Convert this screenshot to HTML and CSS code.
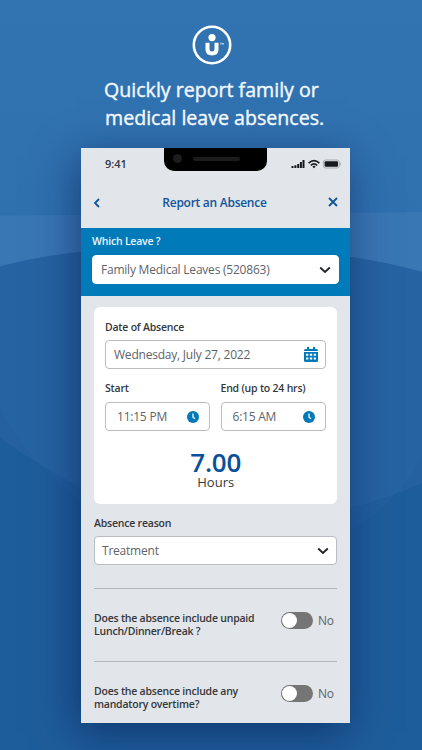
FILE: index.html
```
<!DOCTYPE html>
<html lang="en">
<head>
    <meta charset="UTF-8">
    <meta name="viewport" content="width=device-width, initial-scale=1.0">
    <title>Report an Absence</title>
    <link rel="stylesheet" href="styles.css">
</head>
<body>
    <!-- Background curves -->
    <svg class="backdrop" viewBox="0 0 422 750" aria-hidden="true">
        <defs>
            <linearGradient id="top" x1="0" y1="0" x2="0" y2="1">
                <stop offset="0" stop-color="#3274b1"/>
                <stop offset="1" stop-color="#2f70af"/>
            </linearGradient>
        </defs>
        <rect width="422" height="750" fill="#1e5d9b"/>
        <rect width="422" height="216" fill="url(#top)"/>
        <path d="M0 215.5Q211 214 422 212V300H0Z" fill="#3976b4"/>
        <path d="M0 266.5Q40 256 81 252Q215 238 350 257Q386 262 422 272V750H0Z" fill="#1e5d9b"/>
        <path d="M0 266.5Q40 256 81 252Q215 238 350 257Q386 262 422 272V457Q398 503 350 530Q215 590 80 500Q25 458 0 407Z" fill="#2f6aa8" opacity=".22"/>
        <path d="M0 266.5Q40 256 81 252Q215 238 350 257Q386 262 422 272V483Q390 498 350 508Q215 545 80 487Q38 465 0 438Z" fill="#2f6aa8" opacity=".4"/>
    </svg>

    <div class="promo">
        <svg class="logo" viewBox="0 0 40 40" aria-hidden="true">
            <circle cx="20" cy="20" r="18.2" fill="none" stroke="#fff" stroke-width="2.6"/>
            <circle cx="20" cy="12.6" r="3.6" fill="#fff"/>
            <path d="M15.5 17.8v6.5q0 4.2 4.5 4.2t4.5-4.2v-6.5" fill="none" stroke="#fff" stroke-width="4"/>
            <path d="M28 18.2h1.8M28.9 18.2v1.5M30.3 19.7v-1.5l.6.8.6-.8v1.5" fill="none" stroke="#fff" stroke-width=".5"/>
        </svg>
        <h1><span>Quickly report family or</span><span class="second">medical leave absences.</span></h1>
    </div>

    <div class="phone">
        <div class="status">
            <span class="time">9:41</span>
            <div class="notch"><i class="camera"></i><i class="speaker"></i></div>
            <svg class="signals" viewBox="0 0 50 12" aria-hidden="true">
                <path d="M1.5 10V7.9M4.4 10V7.2M7.2 10V5.9M9.9 10V4M12.5 10V2" stroke="#171a1d" stroke-width="2"/>
                <path d="M17.6 5.1Q23 .3 28.4 5.1M19.8 7.3Q23 4.5 26.2 7.3" fill="none" stroke="#171a1d" stroke-width="1.6"/>
                <path d="M21.3 8.5Q23 7.2 24.7 8.5L23 10.3Z" fill="#171a1d"/>
                <rect x="32.4" y="2" width="15.8" height="8" rx="2" fill="none" stroke="#9a9da1" stroke-width=".8"/>
                <rect x="33.6" y="3.2" width="13.4" height="5.6" rx="1" fill="#171a1d"/>
                <path d="M49.1 4.7v2.7" stroke="#9a9da1"/>
            </svg>
        </div>

        <div class="title-bar">
            <svg class="back" viewBox="0 0 8 10" aria-hidden="true"><path d="M6 1 2 5l4 4"/></svg>
            <h2>Report an Absence</h2>
            <svg class="close" viewBox="0 0 10 10" aria-hidden="true"><path d="m1 1 8 8M9 1 1 9"/></svg>
        </div>

        <div class="leave">
            <label>Which Leave ?</label>
            <div class="field">
                <span>Family Medical Leaves (520863)</span>
                <svg class="chevron" viewBox="0 0 12 8" aria-hidden="true"><path d="m1.2 1.5 4.8 4.5 4.8-4.5"/></svg>
            </div>
        </div>

        <div class="card">
            <label>Date of Absence</label>
            <div class="field date">
                <span>Wednesday, July 27, 2022</span>
                <svg class="calendar" viewBox="0 0 14 15" aria-hidden="true">
                    <path fill="#0079b8" fill-rule="evenodd" d="M3 0h2v2h4V0h2v2h1.5Q14 2 14 3.5V4H0v-.5Q0 2 1.5 2H3ZM0 5h14v8.5q0 1.5-1.5 1.5h-11Q0 15 0 13.5ZM2 6.8v2h2.3v-2Zm3.8 0v2h2.4v-2Zm3.9 0v2H12v-2ZM2 10.6v2h2.3v-2Zm3.8 0v2h2.4v-2Zm3.9 0v2H12v-2Z"/>
                </svg>
            </div>
            <div class="times">
                <div>
                    <label>Start</label>
                    <div class="field hour">
                        <span>11:15 PM</span>
                        <svg class="clock" viewBox="0 0 12 12" aria-hidden="true"><circle cx="6" cy="6" r="6"/><path d="M6 2.6V6.2L8 7.8"/></svg>
                    </div>
                </div>
                <div>
                    <label>End (up to 24 hrs)</label>
                    <div class="field hour">
                        <span>6:15 AM</span>
                        <svg class="clock" viewBox="0 0 12 12" aria-hidden="true"><circle cx="6" cy="6" r="6"/><path d="M6 2.6V6.2L8 7.8"/></svg>
                    </div>
                </div>
            </div>
            <div class="total">7.00</div>
            <div class="unit">Hours</div>
        </div>

        <div class="reason">
            <label>Absence reason</label>
            <div class="field">
                <span>Treatment</span>
                <svg class="chevron" viewBox="0 0 12 8" aria-hidden="true"><path d="m1.2 1.5 4.8 4.5 4.8-4.5"/></svg>
            </div>
        </div>

        <div class="question">
            <p>Does the absence include unpaid<br>Lunch/Dinner/Break ?</p>
            <i class="toggle"></i>
            <span>No</span>
        </div>
        <div class="question">
            <p>Does the absence include any<br>mandatory overtime?</p>
            <i class="toggle"></i>
            <span>No</span>
        </div>
    </div>
</body>
</html>
```
FILE: styles.css
```
* {
    box-sizing: border-box;
}

body {
    font-family: "Open Sans", sans-serif;
    margin: 0;
    height: 750px;
    overflow: hidden;
    color: #35383c;
    background-color: #1e5d9b;
}

svg {
    display: block;
    flex: none;
}

.backdrop {
    position: absolute;
    z-index: -1;
    width: 422px;
    height: 750px;
}

.promo {
    height: 148px;
    padding-top: 25px;
}

.logo {
    width: 40px;
    height: 40px;
    margin-left: 192px;
}

h1 {
    margin: 11px 0 0;
    font-size: 19.6px;
    font-weight: 500;
    line-height: 28px;
    color: #f2f8fe;
    -webkit-text-stroke: 0.4px #f2f8fe;
    white-space: nowrap;
}

h1 span {
    display: block;
    width: fit-content;
    margin-left: 104px;
}

h1 .second {
    margin-left: 105px;
}

.phone {
    width: 269.4px;
    height: 575px;
    margin-left: 81px;
    overflow: hidden;
    background: #e2e5ea;
    box-shadow: -4px 10px 40px rgba(0, 22, 70, 0.52);
}

.status {
    display: flex;
    height: 32px;
    padding-left: 24px;
}

.time {
    width: 59px;
    padding-top: 8px;
    font-size: 11px;
    font-weight: 600;
    line-height: 16px;
}

.notch {
    display: flex;
    align-items: flex-start;
    gap: 11px;
    width: 103px;
    height: 23px;
    padding: 6px 9px;
    background: #000;
    border-radius: 0 0 10px 10px;
}

.camera {
    width: 9px;
    height: 9px;
    background: #1c1c1c;
    border-radius: 50%;
}

.speaker {
    width: 47px;
    height: 4px;
    margin-top: 3px;
    background: #1c1c1c;
    border-radius: 2px;
}

.signals {
    width: 50px;
    height: 12px;
    margin: 10px 0 0 24px;
}

.title-bar {
    display: flex;
    align-items: center;
    justify-content: space-between;
    height: 48px;
    padding: 0 12.5px 0 12px;
}

.title-bar path {
    fill: none;
    stroke: #10559a;
    stroke-width: 1.8;
}

.back {
    width: 8px;
    height: 10px;
    margin-bottom: 3px;
}

.close {
    width: 10px;
    height: 10px;
    margin-bottom: 4px;
}

h2 {
    margin: 0 0 3px;
    font-size: 12px;
    font-weight: 600;
    letter-spacing: -0.27px;
    color: #10559a;
}

label {
    display: block;
    font-size: 10.5px;
    font-weight: 600;
    line-height: 16px;
    letter-spacing: -0.21px;
    white-space: nowrap;
}

.leave {
    height: 67.5px;
    padding: 5px 11px 0;
    background: #007ab8;
}

.leave label {
    color: #eaf6ff;
}

.field {
    display: flex;
    align-items: center;
    justify-content: space-between;
    height: 29px;
    margin-top: 6px;
    padding: 0 7px 0 8px;
    font-size: 12px;
    letter-spacing: -0.22px;
    color: #606469;
    background: #fff;
    border: 1px solid #b9bcc0;
    border-radius: 4px;
    white-space: nowrap;
}

.leave .field {
    border-color: #fff;
}

.chevron {
    width: 12px;
    height: 8px;
}

.chevron path {
    fill: none;
    stroke: #202326;
    stroke-width: 1.8;
}

.card {
    height: 196.5px;
    margin: 11.5px 13px 0;
    padding: 12px 11px 0;
    background: #fff;
    border-radius: 6px;
}

.card .field {
    margin-top: 5px;
}

.calendar {
    width: 14px;
    height: 15px;
}

.times {
    display: grid;
    grid-template-columns: 105px 105px;
    gap: 10.5px;
    margin-top: 11px;
}

.times .hour {
    margin-top: 6px;
    padding: 0 10px 0 11px;
}

.clock {
    width: 12px;
    height: 12px;
}

.clock circle {
    fill: #0079b8;
}

.clock path {
    fill: none;
    stroke: #fff;
    stroke-width: 1.3;
}

.total {
    margin-top: 17px;
    font-size: 26px;
    font-weight: 600;
    line-height: 28px;
    letter-spacing: -0.2px;
    color: #08509a;
    text-align: center;
}

.unit {
    font-size: 13px;
    line-height: 14px;
    margin-top: -1px;
    text-align: center;
}

.reason {
    height: 84.5px;
    margin: 0 13px;
    padding-top: 11px;
}

.reason .field {
    margin-top: 5.5px;
    padding-left: 7px;
}

.question {
    display: flex;
    align-items: flex-start;
    height: 73px;
    margin: 0 13px;
    padding-top: 22.5px;
    border-top: 1px solid #b2b6bd;
}

.question p {
    width: 187px;
    margin: 0;
    font-size: 10.5px;
    font-weight: 600;
    line-height: 13.7px;
    letter-spacing: -0.22px;
    white-space: nowrap;
}

.toggle {
    width: 32px;
    height: 17px;
    padding: 1px;
    background: #757575;
    border-radius: 9px;
}

.toggle::before {
    content: "";
    display: block;
    width: 15px;
    height: 15px;
    background: #fff;
    border-radius: 50%;
}

.question span {
    margin-left: 5px;
    font-size: 12px;
    line-height: 18px;
    letter-spacing: -0.2px;
    color: #606469;
}
```
